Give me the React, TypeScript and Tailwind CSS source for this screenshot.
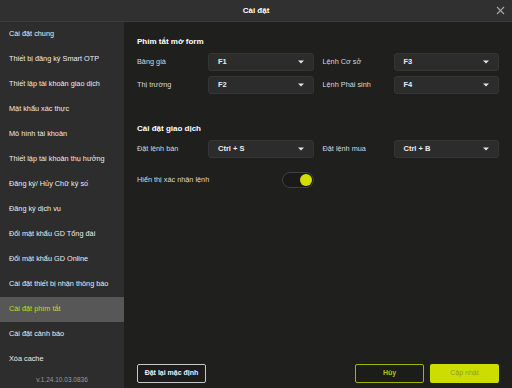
import React from "react";

const menu = [
  "Cài đặt chung",
  "Thiết bị đăng ký Smart OTP",
  "Thiết lập tài khoản giao dịch",
  "Mật khẩu xác thực",
  "Mô hình tài khoản",
  "Thiết lập tài khoản thụ hưởng",
  "Đăng ký/ Hủy Chữ ký số",
  "Đăng ký dịch vụ",
  "Đổi mật khẩu GD Tổng đài",
  "Đổi mật khẩu GD Online",
  "Cài đặt thiết bị nhận thông báo",
  "Cài đặt phím tắt",
  "Cài đặt cảnh báo",
  "Xóa cache",
];

const Select = ({ value }: { value: string }) => (
  <div className="flex-1 h-[18px] rounded-[3px] bg-[#2c2c2c] border border-[#353535] flex items-center justify-between pl-[9px] pr-[9px]">
    <span className="text-[7.5px] font-bold text-[#ececec]">{value}</span>
    <svg width="6" height="4" viewBox="0 0 6 4">
      <path d="M0 0.5 H6 L3 3.5 Z" fill="#e5e5e5" />
    </svg>
  </div>
);

const Field = ({ label, value }: { label: string; value: string }) => (
  <div className="flex items-center">
    <span className="w-[71px] shrink-0 text-[7.3px] text-[#d8d8d8]">{label}</span>
    <Select value={value} />
  </div>
);

export default function App() {
  return (
    <div
      className="w-[512px] h-[388px] flex flex-col bg-[#1f201e] overflow-hidden"
      style={{ fontFamily: '"Liberation Sans", Arial, sans-serif' }}
    >
      {/* Header */}
      <div className="h-[22px] shrink-0 bg-[#303030] border-b border-[#3b3b3b] flex items-center justify-center relative">
        <span className="text-[8px] font-bold text-white">Cài đặt</span>
        <svg className="absolute right-[7px] top-[6px]" width="9" height="9" viewBox="0 0 9 9">
          <path d="M1 1 L8 8 M8 1 L1 8" stroke="#a8a8a8" strokeWidth="1.1" />
        </svg>
      </div>

      <div className="flex flex-1 min-h-0">
        {/* Sidebar */}
        <div className="w-[124px] shrink-0 bg-[#2d2d2d] flex flex-col">
          {menu.map((item) => (
            <div
              key={item}
              className={`h-[25px] shrink-0 flex items-center pl-[9px] text-[7.3px] ${
                item === "Cài đặt phím tắt"
                  ? "bg-[#575757] text-[#c9d62a]"
                  : "text-[#ececec]"
              }`}
            >
              {item}
            </div>
          ))}
          <div className="flex-1 flex items-center justify-center text-[6.5px] text-[#9a9a9a]">
            v.1.24.10.03.0836
          </div>
        </div>

        {/* Main */}
        <div className="flex-1 flex flex-col pl-[13px] pr-[13px] pt-[15px] pb-[5px]">
          <div className="text-[8px] font-bold text-white leading-[10px]">Phím tắt mở form</div>
          <div className="grid grid-cols-2 gap-x-[9px] gap-y-[5px] mt-[6px]">
            <Field label="Bảng giá" value="F1" />
            <Field label="Lệnh Cơ sở" value="F3" />
            <Field label="Thị trường" value="F2" />
            <Field label="Lệnh Phái sinh" value="F4" />
          </div>

          <div className="text-[8px] font-bold text-white leading-[10px] mt-[30px]">Cài đặt giao dịch</div>
          <div className="grid grid-cols-2 gap-x-[9px] mt-[6px]">
            <Field label="Đặt lệnh bán" value="Ctrl + S" />
            <Field label="Đặt lệnh mua" value="Ctrl + B" />
          </div>

          <div className="flex items-center mt-[14px]">
            <span className="w-[145px] shrink-0 text-[7.3px] text-[#d8d8d8]">Hiển thị xác nhận lệnh</span>
            <div className="w-[32px] h-[16px] rounded-full bg-[#1a1a1a] border border-[#404040] flex items-center justify-end pr-[1px]">
              <div className="w-[12px] h-[12px] rounded-full bg-[#d2df00]" />
            </div>
          </div>

          <div className="flex-1" />

          <div className="flex items-center">
            <button className="w-[69px] h-[19px] rounded-[2px] border border-[#c8c8c8] bg-[#1c1c1c] text-[7px] font-bold text-[#f0f0f0]">
              Đặt lại mặc định
            </button>
            <div className="flex-1" />
            <button className="w-[69px] h-[19px] rounded-[2px] border border-[#a5b300] bg-[#1c1d1b] text-[7px] font-bold text-[#b6c400]">
              Hủy
            </button>
            <button className="w-[69px] h-[19px] ml-[6px] rounded-[2px] bg-[#cddd00] text-[7px] text-[#8e9a3a]">
              Cập nhật
            </button>
          </div>
        </div>
      </div>
    </div>
  );
}
